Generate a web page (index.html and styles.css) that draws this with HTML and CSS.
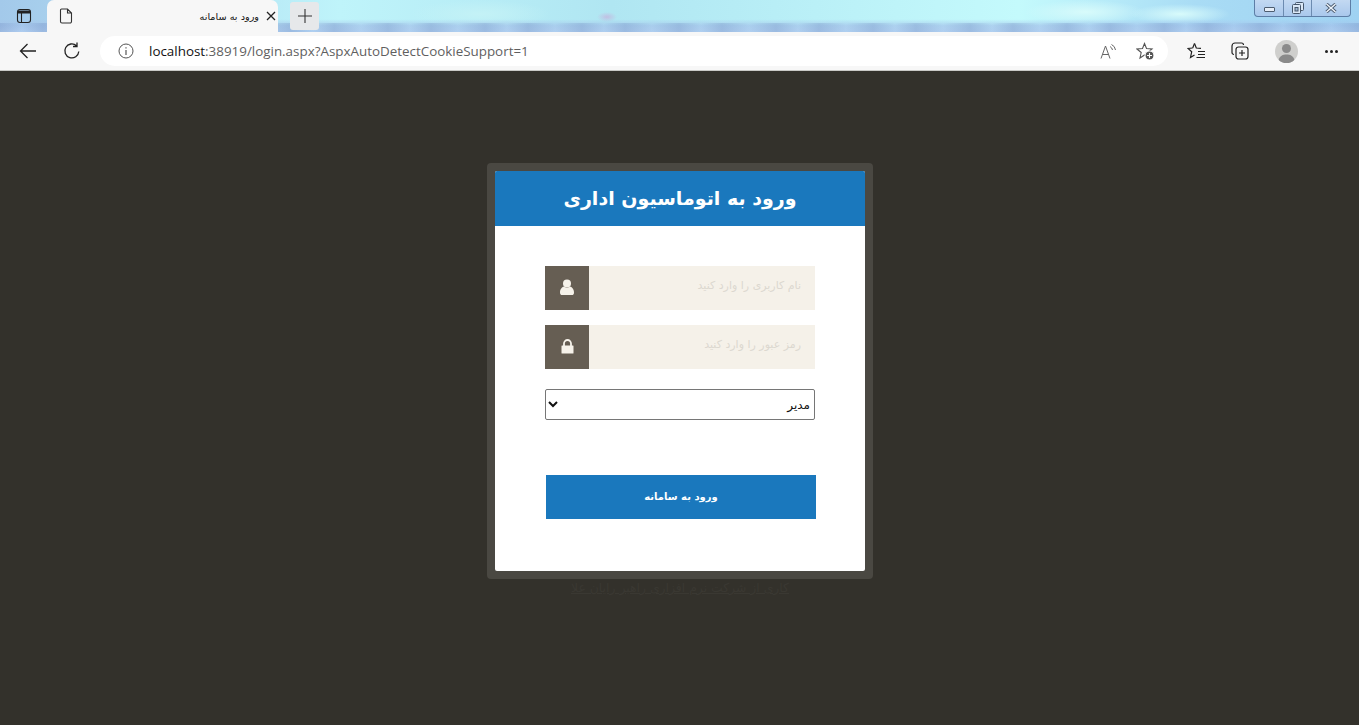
FILE: index.html
```html
<!DOCTYPE html>
<html lang="fa">
<head>
    <meta charset="UTF-8">
    <meta name="viewport" content="width=device-width, initial-scale=1.0">
    <title>ورود به سامانه</title>
    <link rel="stylesheet" href="styles.css">
</head>
<body>
    <header class="browser">
        <div class="tabstrip">
            <div class="strip-btn">
                <svg width="16" height="16" viewBox="0 0 16 16" fill="none" stroke="#222" stroke-width="1.1"><rect x="1.5" y="1.5" width="13" height="13" rx="2.5"/><path d="M1.5 5H14.5M5.5 5V14.5"/><path d="M2 2.5H14V5H2Z" fill="#222" stroke="none"/></svg>
            </div>
            <div class="tab">
                <svg class="tab-page" width="14" height="16" viewBox="0 0 14 16" fill="none" stroke="#333" stroke-width="1.1"><path d="M2.5 1H8.5L12.5 5V13.5A1.5 1.5 0 0 1 11 15H3A1.5 1.5 0 0 1 1.5 13.5V2A1 1 0 0 1 2.5 1ZM8.5 1V5H12.5"/></svg>
                <span class="tab-title" dir="rtl">ورود به سامانه</span>
                <svg class="tab-close" width="10" height="10" viewBox="0 0 10 10" stroke="#222" stroke-width="1.3"><path d="M1 1L9 9M9 1L1 9"/></svg>
            </div>
            <div class="new-tab">
                <svg width="16" height="16" viewBox="0 0 16 16" stroke="#333" stroke-width="1.1"><path d="M8 1V15M1 8H15"/></svg>
            </div>
            <div class="win-controls">
                <div class="win-btn win-min"><span class="min-bar"></span></div>
                <div class="win-btn win-max">
                    <svg width="12" height="12" viewBox="0 0 12 12" fill="#dbe8f6" stroke="#46566a" stroke-width="1"><rect x="3.5" y="0.5" width="8" height="8" rx="1"/><rect x="0.5" y="2.5" width="8" height="9" rx="1"/><rect x="3" y="5.5" width="3" height="3.500" fill="#9fb8d2"/></svg>
                </div>
                <div class="win-btn win-close">
                    <svg width="12" height="10" viewBox="0 0 12 10" fill="none"><path d="M1.500 1L10.500 9M10.500 1L1.500 9" stroke="#46566a" stroke-width="3.200"/><path d="M1.500 1L10.500 9M10.500 1L1.500 9" stroke="#eef4fb" stroke-width="1.500"/></svg>
                </div>
            </div>
        </div>
        <div class="toolbar">
            <svg class="tool back" width="18" height="16" viewBox="0 0 18 16" fill="none" stroke="#222" stroke-width="1.3"><path d="M17 8H1.500M8.500 1L1.500 8L8.500 15"/></svg>
            <svg class="tool reload" width="18" height="18" viewBox="0 0 18 18" fill="none" stroke="#222" stroke-width="1.3"><path d="M15.800 9.500A7 7 0 1 1 13.500 3.700M14 0.500V4.500H10"/></svg>
            <div class="address">
                <svg class="info" width="16" height="16" viewBox="0 0 16 16" fill="none" stroke="#555" stroke-width="1"><circle cx="8" cy="8" r="7"/><path d="M8 7V12M8 4.200V5.400" stroke-width="1.200"/></svg>
                <span class="url"><b>localhost</b>:38919/login.aspx?AspxAutoDetectCookieSupport=1</span>
                <svg class="read" width="17" height="15" viewBox="0 0 17 15" fill="none" stroke="#666" stroke-width="1"><path d="M1 14.500L5.500 2L10 14.500M2.600 10.500H8.400"/><path d="M10 2.500A5 5 0 0 1 12.500 6M11.500 0.500A7 7 0 0 1 15.500 6"/></svg>
                <svg class="fav-add" width="19" height="19" viewBox="0 0 19 19" fill="none" stroke="#555" stroke-width="1.100"><path d="M8.500 1.500L10.500 6.500L16 7L11.800 10.500L13 16L8.500 13L4 16L5.200 10.500L1 7L6.500 6.500Z"/><circle cx="13.500" cy="13.500" r="4.500" fill="#555" stroke="#fff"/><path d="M13.500 11V16M11 13.500H16" stroke="#fff"/></svg>
            </div>
            <svg class="tool favs" width="19" height="18" viewBox="0 0 19 18" fill="none" stroke="#222" stroke-width="1.200"><path d="M7.500 1.500L9.300 6L14 6.400M5.700 6L1 6.400L4.700 9.700L3.500 15.500L7.500 13"/><path d="M5.700 6L7.500 1.500M11 9.500H18M11 12.500H18M9.500 15.500H18"/></svg>
            <svg class="tool colls" width="18" height="18" viewBox="0 0 18 18" fill="none" stroke="#222" stroke-width="1.200"><path d="M3 12.500A2 2 0 0 1 1 10.500V4A3 3 0 0 1 4 1H10.500A2 2 0 0 1 12.500 3"/><rect x="5" y="5" width="12" height="12" rx="2.500"/><path d="M11 8V14M8 11H14"/></svg>
            <div class="avatar">
                <svg width="23" height="23" viewBox="0 0 23 23" fill="#8a8a8a"><circle cx="11.500" cy="8.500" r="4.500"/><path d="M3.500 20.500C4.500 15.500 8 14.500 11.500 14.500S18.500 15.500 19.500 20.500A11 11 0 0 1 3.500 20.500Z"/></svg>
            </div>
            <div class="more"><span></span><span></span><span></span></div>
        </div>
    </header>

    <main class="page">
        <div class="login-frame">
            <form class="login-box" dir="rtl">
                <h1 class="login-title">ورود به اتوماسیون اداری</h1>
                <div class="login-body">
                    <div class="field">
                        <input type="text" class="field-input" placeholder="نام کاربری را وارد کنید">
                        <span class="field-icon">
                            <svg class="icon-up" width="16" height="17" viewBox="0 0 16 17" fill="#f6f2ea"><circle cx="8" cy="4.500" r="4"/><path d="M1 13.500C1 9.500 3.500 8 5 7.500C6 9 10 9 11 7.500C12.500 8 15 9.500 15 13.500C15 15.500 14 16 13 16H3C2 16 1 15.500 1 13.500Z"/></svg>
                        </span>
                    </div>
                    <div class="field">
                        <input type="password" class="field-input" placeholder="رمز عبور را وارد کنید">
                        <span class="field-icon">
                            <svg class="icon-up" width="13" height="15" viewBox="0 0 13 15"><path d="M3 7V4.500A3.500 3.500 0 0 1 10 4.500V7" fill="none" stroke="#f6f2ea" stroke-width="1.800"/><rect x="0.500" y="6.500" width="12" height="8" rx="0.500" fill="#f6f2ea"/></svg>
                        </span>
                    </div>
                    <select class="role">
                        <option>مدیر</option>
                    </select>
                    <button type="button" class="submit">ورود به سامانه</button>
                </div>
            </form>
        </div>
        <a class="credit" dir="rtl" href="#">کاری از شرکت نرم افزاری راهبر رایان علا</a>
    </main>
</body>
</html>
```

FILE: styles.css
```css
html, body {
    height: 100%;
}
body {
    margin: 0;
    display: flex;
    flex-direction: column;
    background: #33312b;
    font-family: "DejaVu Sans", sans-serif;
    overflow: hidden;
}

/* browser chrome */
.browser {
    flex: none;
    height: 71px;
    background: #f7f7f7;
    border-bottom: 1px solid #c9c9c6;
    box-sizing: border-box;
}
.tabstrip {
    height: 32px;
    display: flex;
    align-items: flex-start;
    background:
        repeating-linear-gradient(to right, rgba(110,140,190,.3) 0, rgba(170,200,235,0) 22px, rgba(110,140,190,.3) 43px, rgba(170,200,235,0) 70px, rgba(110,140,190,.3) 97px) 0 23px / 100% 9px no-repeat,
        linear-gradient(to bottom, rgba(170,200,230,0) 60%, rgba(165,195,235,.7) 80%, rgba(175,205,240,.95) 100%),
        radial-gradient(ellipse 10px 5px at 607px 17px, rgba(200,175,220,.7), transparent),
        radial-gradient(ellipse 60px 12px at 1085px 12px, #d8fbfb, transparent),
        radial-gradient(ellipse 50px 10px at 1180px 14px, #d8fbfb, transparent),
        radial-gradient(ellipse 70px 14px at 480px 14px, #c4f2f6, transparent),
        linear-gradient(to right, #a3c9ea 0, #bff4fa 25%, #b0e6f2 45%, #c4fafc 75%, #a9dcf5 88%, #9fd2f2 100%);
}
.strip-btn {
    width: 47px;
    height: 32px;
    display: flex;
    align-items: center;
    justify-content: center;
}
.tab {
    width: 231px;
    height: 32px;
    box-sizing: border-box;
    padding: 0 2px 0 12px;
    display: flex;
    align-items: center;
    background: #f7f7f7;
    border-radius: 7px 7px 0 0;
}
.tab-title {
    margin-left: auto;
    margin-right: 7px;
    font-size: 9.7px;
    color: #111;
}
.new-tab {
    margin: 2px 0 0 12px;
    width: 29px;
    height: 28px;
    display: flex;
    align-items: center;
    justify-content: center;
    background: #e6e8ea;
    border-radius: 3px;
}
.win-controls {
    margin: 0 8px 0 auto;
    width: 97px;
    height: 17px;
    display: flex;
    box-sizing: border-box;
    border: 1px solid #5d7ea6;
    border-top: 0;
    border-radius: 0 0 4px 4px;
    background: linear-gradient(to bottom, #c3d9f2, #a9c8ec);
}
.win-btn {
    height: 16px;
    display: flex;
    align-items: center;
    justify-content: center;
    border-left: 1px solid #6c8bb0;
}
.win-min { width: 28px; border-left: 0; }
.win-max { width: 27px; }
.win-close { flex: 1; }
.min-bar {
    width: 11px;
    height: 5px;
    margin-top: 3px;
    box-sizing: border-box;
    background: #e6eef8;
    border: 1px solid #4d5d70;
    border-radius: 1px;
}

.toolbar {
    height: 38px;
    display: flex;
    align-items: center;
}
.tool {
    flex: none;
}
.back { margin-left: 19px; }
.reload { margin-left: 26px; }
.address {
    margin-left: 19px;
    width: 1068px;
    height: 30px;
    box-sizing: border-box;
    padding: 0 13px 0 18px;
    display: flex;
    align-items: center;
    background: #fff;
    border-radius: 15px;
}
.url {
    margin-left: 15px;
    font-family: "Open Sans", sans-serif;
    font-size: 13.4px;
    color: #5f5f5f;
    white-space: nowrap;
}
.url b {
    font-weight: 400;
    color: #111;
}
.read { margin-left: auto; }
.fav-add { margin-left: 19px; }
.favs { margin-left: 19px; }
.colls { margin-left: 25px; }
.avatar {
    margin-left: 26px;
    width: 23px;
    height: 23px;
    border-radius: 50%;
    background: #cfcfcd;
    overflow: hidden;
}
.avatar svg { display: block; }
.more {
    margin-left: 27px;
    display: flex;
    gap: 2px;
}
.more span {
    width: 3px;
    height: 3px;
    border-radius: 50%;
    background: #222;
}

/* login */
.page {
    flex: 1;
    padding: 92px 0 0 1px;
    display: flex;
    flex-direction: column;
    align-items: center;
}
.login-frame {
    width: 386px;
    box-sizing: border-box;
    padding: 8px;
    background: #4a4842;
    border-radius: 4px;
}
.login-box {
    background: #fff;
    border-radius: 2px;
    overflow: hidden;
}
.login-title {
    margin: 0;
    height: 55px;
    line-height: 54px;
    text-align: center;
    font-size: 19px;
    font-weight: 700;
    color: #fff;
    background: #1a78bd;
}
.login-body {
    height: 345px;
    box-sizing: border-box;
    padding: 40px 50px 0;
}
.field {
    height: 44px;
    margin-bottom: 15px;
    display: flex;
}
.field-input {
    flex: 1;
    min-width: 0;
    border: 0;
    outline: 0;
    padding: 0 14px 6px;
    background: #f5f1e9;
    font-family: "DejaVu Sans", sans-serif;
    font-size: 11px;
    text-align: right;
}
.field-input::placeholder {
    color: #dcd8d0;
    opacity: 1;
}
.field-icon {
    width: 44px;
    display: flex;
    align-items: center;
    justify-content: center;
    background: #665e53;
}
.icon-up {
    margin-bottom: 2px;
}
.role {
    display: block;
    width: 100%;
    height: 31px;
    margin-top: 20px;
    padding: 0 0 0 2px;
    box-sizing: border-box;
    background: #fff;
    border: 1px solid #767676;
    border-radius: 2px;
    font-family: "DejaVu Sans", sans-serif;
    font-size: 12px;
    color: #111;
}
.submit {
    display: block;
    width: 270px;
    height: 44px;
    margin: 55px -1px 0 0;
    border: 0;
    padding: 0 0 2px;
    background: #1a78bd;
    color: #fff;
    font-family: "DejaVu Sans", sans-serif;
    font-size: 10px;
    font-weight: 700;
}
.credit {
    margin-top: 1px;
    font-size: 12.4px;
    color: #3a3832;
}
```
